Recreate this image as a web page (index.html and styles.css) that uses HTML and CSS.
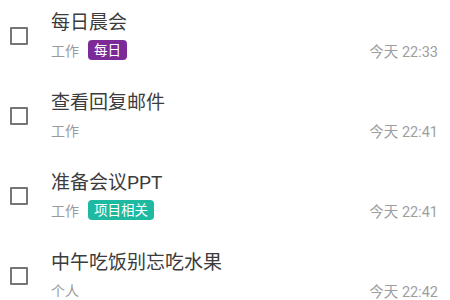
FILE: index.html
```html
<!DOCTYPE html>
<html lang="zh-CN">
<head>
<meta charset="utf-8">
<link rel="stylesheet" href="styles.css">
</head>
<body>
<ul class="list">
  <li class="item">
    <span class="check"></span>
    <div class="body">
      <div class="title">每日晨会</div>
      <div class="meta">
        <span class="cat">工作</span>
        <span class="tag tag-purple">每日</span>
        <span class="time">今天 22:33</span>
      </div>
    </div>
  </li>
  <li class="item">
    <span class="check"></span>
    <div class="body">
      <div class="title">查看回复邮件</div>
      <div class="meta">
        <span class="cat">工作</span>
        <span class="time">今天 22:41</span>
      </div>
    </div>
  </li>
  <li class="item">
    <span class="check"></span>
    <div class="body">
      <div class="title">准备会议PPT</div>
      <div class="meta">
        <span class="cat">工作</span>
        <span class="tag tag-teal">项目相关</span>
        <span class="time">今天 22:41</span>
      </div>
    </div>
  </li>
  <li class="item">
    <span class="check"></span>
    <div class="body">
      <div class="title">中午吃饭别忘吃水果</div>
      <div class="meta">
        <span class="cat">个人</span>
        <span class="time">今天 22:42</span>
      </div>
    </div>
  </li>
</ul>
</body>
</html>
```
FILE: styles.css
```css
html, body {
  margin: 0;
  padding: 0;
  background: #ffffff;
  height: 100%;
  overflow: hidden;
}
body {
  font-family: Roboto, "Noto Sans CJK SC", sans-serif;
}
.list {
  list-style: none;
  margin: 0;
  padding: 0;
}
.item {
  display: flex;
  align-items: flex-start;
  height: 80px;
  padding: 0 12px 0 10px;
  box-sizing: border-box;
}
.check {
  flex: none;
  width: 18px;
  height: 18px;
  margin-top: 27px;
  border: 2px solid #757575;
  box-sizing: border-box;
  border-radius: 1px;
}
.body {
  flex: 1;
  margin-left: 23px;
  padding-top: 10px;
}
.title {
  font-size: 19px;
  line-height: 26px;
  color: #3c3c3c;
}
.meta {
  display: flex;
  align-items: center;
  margin-top: 4px;
  height: 20px;
}
.cat {
  font-size: 14px;
  color: #9a9a9a;
}
.tag {
  margin-left: 9px;
  height: 20px;
  line-height: 20px;
  padding: 0 6px;
  border-radius: 4px;
  font-size: 13.5px;
  color: #ffffff;
}
.tag-purple {
  background: #7b2a98;
}
.tag-teal {
  background: #1db9a1;
}
.time {
  margin-left: auto;
  font-size: 14.5px;
  color: #9e9e9e;
}
```
